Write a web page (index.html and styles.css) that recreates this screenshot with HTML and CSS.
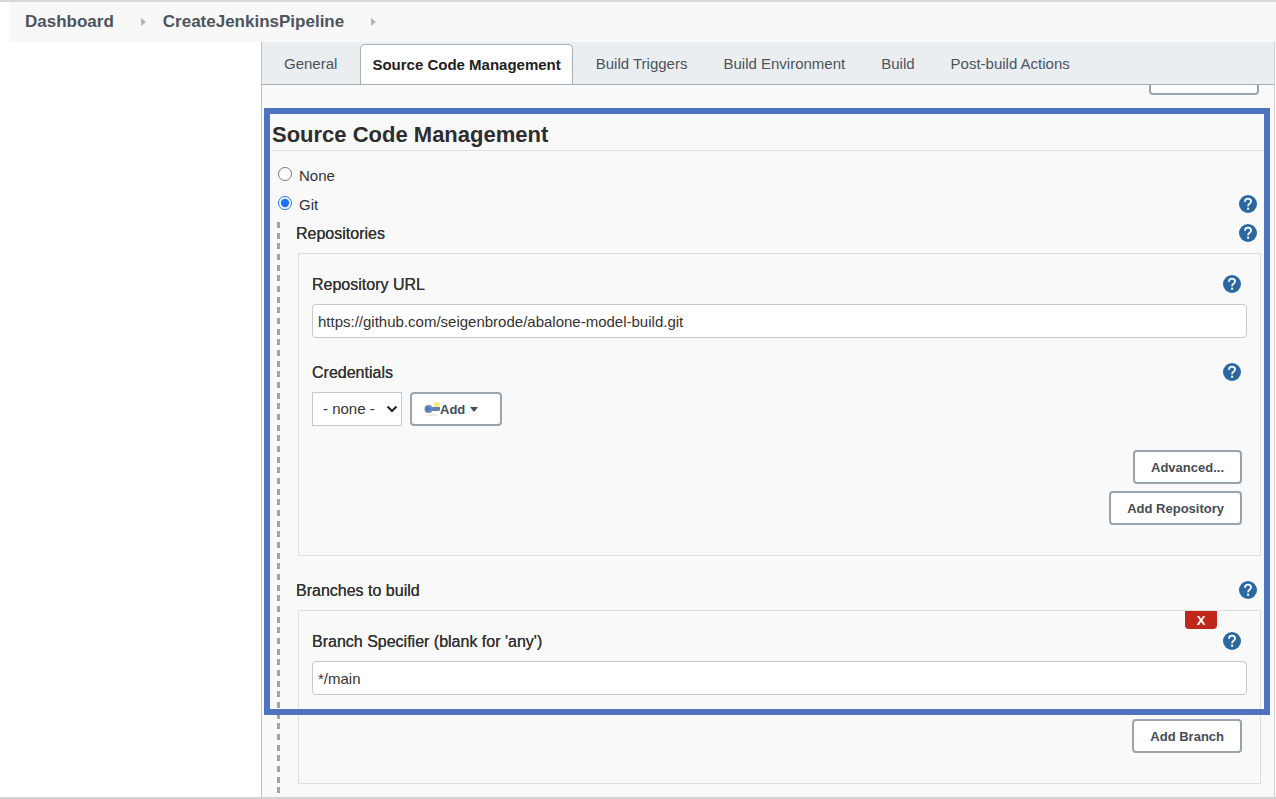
FILE: index.html
```html
<!DOCTYPE html>
<html lang="en">
<head>
    <meta charset="UTF-8">
    <meta name="viewport" content="width=device-width, initial-scale=1.0">
    <title>CreateJenkinsPipeline Config</title>
    <link rel="stylesheet" href="styles.css">
</head>
<body>
    <svg width="0" height="0" class="sprite" aria-hidden="true">
        <symbol id="help" viewBox="0 0 18 18">
            <circle cx="9" cy="9" r="9" fill="#2b6aa0"/>
            <path d="M6 6.7C6 4.700 7.300 3.600 9 3.600s3 1.100 3 2.800c0 2.200-2.900 2.400-2.900 4.800" fill="none" stroke="#fff" stroke-width="1.800"/>
            <rect x="8.100" y="12.700" width="2" height="2" fill="#fff"/>
        </symbol>
    </svg>

    <nav class="breadcrumbs">
        <a href="#">Dashboard</a>
        <span class="crumb-arrow"></span>
        <a href="#">CreateJenkinsPipeline</a>
        <span class="crumb-arrow"></span>
    </nav>

    <div class="page">
        <aside class="side-panel"></aside>
        <main class="main-panel">
            <nav class="tab-bar">
                <a href="#" class="tab">General</a>
                <a href="#" class="tab active">Source Code Management</a>
                <a href="#" class="tab">Build Triggers</a>
                <a href="#" class="tab">Build Environment</a>
                <a href="#" class="tab">Build</a>
                <a href="#" class="tab">Post-build Actions</a>
            </nav>

            <form class="config">
                <div class="scrolled-row">
                    <button type="button" class="btn btn-advanced" aria-label="Advanced"></button>
                </div>

                <section class="scm">
                    <h2>Source Code Management</h2>
                    <div class="radio-row">
                        <label><input type="radio" name="scm">None</label>
                    </div>
                    <div class="radio-row">
                        <label><input type="radio" name="scm" checked>Git</label>
                        <a href="#" class="help" aria-label="Help for Git"><svg><use href="#help"/></svg></a>
                    </div>

                    <div class="nested">
                        <div class="field-label group-label">
                            <span>Repositories</span>
                            <a href="#" class="help" aria-label="Help for Repositories"><svg><use href="#help"/></svg></a>
                        </div>
                        <div class="box">
                            <div class="field-label">
                                <label for="repo-url">Repository URL</label>
                                <a href="#" class="help" aria-label="Help for Repository URL"><svg><use href="#help"/></svg></a>
                            </div>
                            <input type="text" id="repo-url" value="https://github.com/seigenbrode/abalone-model-build.git">
                            <div class="field-label next">
                                <label for="credentials">Credentials</label>
                                <a href="#" class="help" aria-label="Help for Credentials"><svg><use href="#help"/></svg></a>
                            </div>
                            <div class="credentials">
                                <div class="select">
                                    <select id="credentials">
                                        <option>- none -</option>
                                    </select>
                                    <svg class="chevron" viewBox="0 0 12 8"><path d="M1.5 1.5L6 6l4.5-4.5" fill="none" stroke="#222" stroke-width="2.2"/></svg>
                                </div>
                                <button type="button" class="btn btn-add">
                                    <svg class="key" viewBox="0 0 16 16">
                                        <ellipse cx="8" cy="14" rx="6" ry="1" fill="#ececec"/>
                                        <circle cx="13" cy="4" r="3" fill="#f7ee7a"/>
                                        <path d="M7 6h9v3l-1 1H7z" fill="#5f86b8"/>
                                        <circle cx="4.500" cy="8" r="4" fill="#6389c2"/>
                                        <circle cx="3.500" cy="8" r="2" fill="#507ab5"/>
                                    </svg>
                                    Add
                                    <span class="caret"></span>
                                </button>
                            </div>
                            <div class="actions">
                                <button type="button" class="btn">Advanced...</button>
                                <button type="button" class="btn">Add Repository</button>
                            </div>
                        </div>

                        <div class="field-label group-label next">
                            <span>Branches to build</span>
                            <a href="#" class="help" aria-label="Help for Branches to build"><svg><use href="#help"/></svg></a>
                        </div>
                        <div class="box">
                            <button type="button" class="delete">X</button>
                            <div class="field-label">
                                <label for="branch">Branch Specifier (blank for 'any')</label>
                                <a href="#" class="help" aria-label="Help for Branch Specifier"><svg><use href="#help"/></svg></a>
                            </div>
                            <input type="text" id="branch" value="*/main">
                            <div class="actions">
                                <button type="button" class="btn">Add Branch</button>
                            </div>
                        </div>
                    </div>
                </section>
                <div class="highlight"></div>
            </form>
        </main>
    </div>
</body>
</html>
```
FILE: styles.css
```css
* {
    box-sizing: border-box;
}

body {
    margin: 0;
    height: 100vh;
    display: flex;
    flex-direction: column;
    border-top: 2px solid #d6d6d6;
    border-bottom: 2px solid #d2d2d2;
    background: #fff;
    color: #333;
    font-family: "Helvetica Neue", "Liberation Sans", Arial, sans-serif;
    font-size: 15px;
    line-height: 20px;
    overflow: hidden;
}

a {
    color: inherit;
    text-decoration: none;
}

.sprite {
    position: absolute;
}

/* breadcrumbs */
.breadcrumbs {
    display: flex;
    align-items: center;
    flex: none;
    height: 40px;
    margin-left: 9px;
    padding-left: 16px;
    background: #f8f8f8;
    color: #4d545d;
    font-size: 17px;
    font-weight: bold;
}

.crumb-arrow {
    margin: 0 17px 0 27px;
    border: 4px solid transparent;
    border-left: 5px solid #b4b4b4;
    border-right: 0;
}

/* layout */
.page {
    display: flex;
    flex: 1;
    min-height: 0;
}

.side-panel {
    flex: none;
    width: 261px;
}

.main-panel {
    display: flex;
    flex-direction: column;
    flex: 1;
    min-width: 0;
    margin-right: 1px;
    border-left: 1px solid #bfc2c5;
    border-right: 1px solid #d0d3d5;
    background: #f9f9f9;
}

/* tabs */
.tab-bar {
    display: flex;
    align-items: flex-end;
    flex: none;
    height: 43px;
    padding-left: 4px;
    border-bottom: 1px solid #a5b0b9;
    background: #eaeef1;
    color: #4d545d;
}

.tab {
    padding: 10px 18px;
}

.tab.active {
    margin: 0 5px;
    padding: 10px 11px 9px;
    border: 1px solid #a5b0b9;
    border-bottom: 0;
    border-radius: 5px 5px 0 0;
    background: #fff;
    color: #222;
    font-weight: bold;
}

/* form */
.config {
    position: relative;
    display: flex;
    flex-direction: column;
    flex: 1;
    min-height: 0;
}

.scrolled-row {
    display: flex;
    align-items: flex-end;
    justify-content: flex-end;
    flex: none;
    height: 10px;
    padding-right: 15px;
    overflow: hidden;
}

.scm {
    display: flex;
    flex-direction: column;
    flex: 1;
    padding: 25px 10px 2px;
}

h2 {
    margin: 0 0 10px;
    border-bottom: 1px solid #e0e0e0;
    color: #2d2d2d;
    font-size: 22px;
    line-height: 30px;
}

.radio-row {
    display: flex;
    align-items: center;
    justify-content: space-between;
    height: 29px;
    padding: 0 7px 0 6px;
}

.radio-row label {
    display: flex;
    align-items: center;
}

.radio-row input {
    width: 14px;
    height: 14px;
    margin: 0 7px 3px 0;
    accent-color: #1a73f8;
}

.nested {
    flex: 1;
    margin: 3px 0 0 5px;
    padding-left: 19px;
    background: linear-gradient(#a3a3a3 6px, transparent 6px 11px, #a3a3a3 11px 17px, transparent 17px 21px, #a3a3a3 21px 27px, transparent 27px) 0 0 / 3px 32px repeat-y;
}

.field-label {
    display: flex;
    align-items: center;
    justify-content: space-between;
    height: 24px;
    margin-bottom: 7px;
    padding-right: 6px;
    color: #333;
    font-size: 16px;
    text-shadow: 0 0 currentColor;
}

.group-label {
    padding-right: 7px;
}

.next {
    margin-top: 23px;
}

.help {
    display: block;
    height: 20px;
}

.help svg {
    display: block;
    width: 18px;
    height: 18px;
}

.box {
    position: relative;
    margin: 0 3px 0 2px;
    padding: 19px 13px 30px;
    border: 1px solid #dedede;
}

input[type="text"] {
    display: block;
    width: 100%;
    height: 34px;
    padding: 0 5px;
    border: 1px solid #c8c8c8;
    border-radius: 4px;
    background: #fff;
    color: #333;
    font: inherit;
}

.credentials {
    display: flex;
    gap: 8px;
}

.select {
    position: relative;
}

select {
    width: 90px;
    height: 34px;
    padding: 0 10px;
    border: 1px solid #c8c8c8;
    border-radius: 0;
    background: #fff;
    color: #333;
    font: inherit;
    appearance: none;
}

.chevron {
    position: absolute;
    top: 13px;
    right: 4px;
    width: 12px;
    height: 8px;
    pointer-events: none;
}

/* buttons */
.btn {
    flex: none;
    height: 34px;
    padding: 0 16px;
    border: 2px solid #98a4ae;
    border-radius: 4px;
    background: #fff;
    color: #454c56;
    font-family: inherit;
    font-size: 13px;
    font-weight: bold;
}

.btn-advanced {
    width: 110px;
}

.btn-add {
    display: flex;
    align-items: center;
    width: 92px;
    padding: 0 12px;
}

.key {
    width: 16px;
    height: 16px;
}

.caret {
    margin-left: 5px;
    border: 4px solid transparent;
    border-top: 5px solid #454c56;
    border-bottom: 0;
}

.actions {
    display: flex;
    flex-direction: column;
    align-items: flex-end;
    gap: 7px;
    margin-top: 24px;
    padding-right: 5px;
}

.delete {
    position: absolute;
    top: 0;
    right: 43px;
    width: 32px;
    height: 18px;
    padding: 0;
    border: 0;
    border-radius: 0 0 4px 4px;
    background: #bf271b;
    color: #fff;
    font-family: inherit;
    font-size: 13px;
    font-weight: bold;
}

/* blue frame over the SCM settings */
.highlight {
    position: absolute;
    top: 23px;
    left: 2px;
    right: 4px;
    bottom: 82px;
    border: 6px solid #4e73bf;
    pointer-events: none;
}
```
